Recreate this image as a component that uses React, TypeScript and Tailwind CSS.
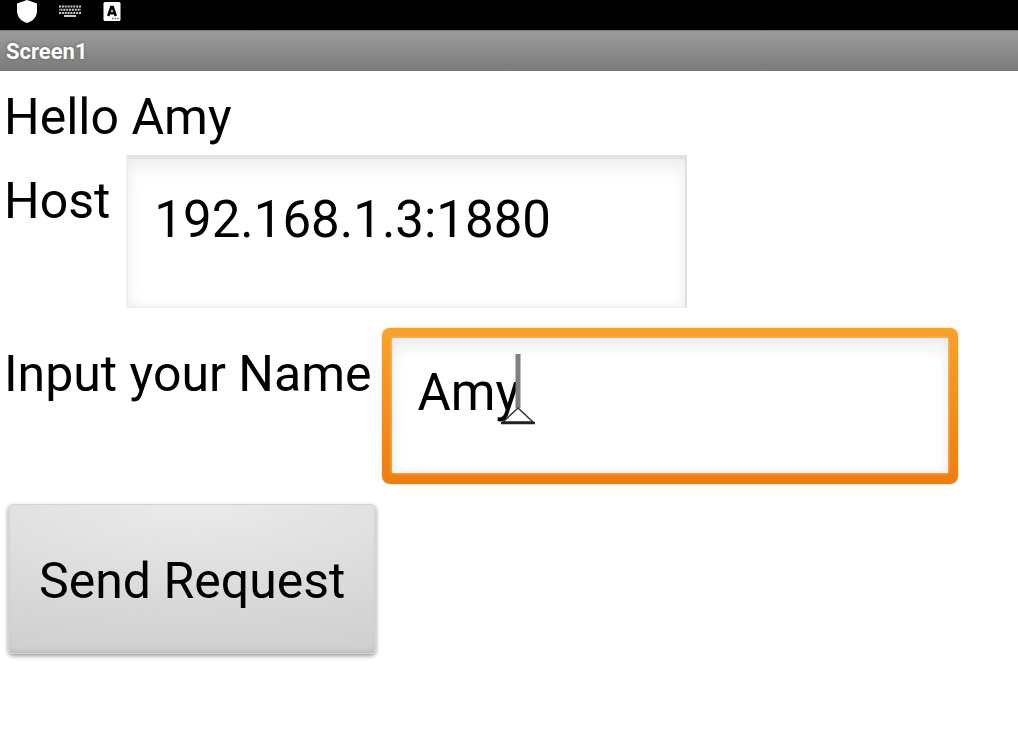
import { useState } from "react";

function StatusBar() {
  return (
    <div className="flex h-[30px] items-start gap-[18px] bg-black pl-[17px]">
      <svg width="20" height="24" viewBox="0 0 20 24" aria-hidden="true">
        <path d="M10 0 L20 3.500 V11 C20 17 15.500 21.500 10 23 C4.500 21.500 0 17 0 11 V3.500 Z" fill="#fff" />
      </svg>
      <svg width="30" height="24" viewBox="0 0 30 24" aria-hidden="true">
        <g stroke="#ccc" strokeWidth="2" fill="none">
          <path d="M4 6.500 H26" strokeDasharray="2 0.860" />
          <path d="M4 9.700 H26" strokeDasharray="2 0.860" strokeDashoffset="1.400" />
          <path d="M4 12.900 H26" strokeDasharray="2 0.860" />
          <path d="M9 16 H21" />
        </g>
      </svg>
      <svg width="18" height="24" viewBox="0 0 18 24" aria-hidden="true">
        <rect x="0.500" y="2" width="17" height="19" rx="1.500" fill="#fff" />
        <path
          d="M5.200 16 L8.300 7 H9.700 L12.800 16 M6.500 13.200 H11.500"
          fill="none"
          stroke="#000"
          strokeWidth="2.600"
        />
        <path d="M9 18.500 H16" stroke="#777" strokeWidth="1.500" strokeDasharray="1.600 1" />
      </svg>
    </div>
  );
}

export default function App() {
  const [host, setHost] = useState("192.168.1.3:1880");
  const [name, setName] = useState("Amy");

  return (
    <div className="min-h-screen bg-white font-[Roboto,sans-serif] text-[50px] leading-[60px] text-black">
      <StatusBar />
      <header className="flex h-[41px] items-center border-t border-[#777] bg-linear-to-b from-[#9c9c9c] to-[#7b7b7b] px-[6px] pt-[2px]">
        <h1 className="text-[22px] leading-[26px] font-bold text-white [text-shadow:0_0_3px_#555]">Screen1</h1>
      </header>
      <main className="flex flex-col items-start px-1 pt-4">
        <p>Hello Amy</p>
        <div className="mt-2 flex items-start gap-4">
          <label htmlFor="host" className="shrink-0 pt-4">
            Host
          </label>
          <input
            id="host"
            type="text"
            value={host}
            onChange={(e) => setHost(e.target.value)}
            className="h-[153px] w-[561px] min-w-0 border-2 border-t-4 border-[#f0f0f0] border-t-[#e2e2e2] border-r-[#dedede] bg-white px-[26px] pt-[30px] pb-[57px] text-[51px] shadow-[inset_0_10px_20px_-4px_#ececec,inset_0_0_12px_#f4f4f4] outline-none"
          />
        </div>
        <div className="mt-5 flex items-start gap-[10px]">
          <label htmlFor="name" className="shrink-0 pt-4">
            Input your Name
          </label>
          <div className="relative min-w-0 rounded-[8px] bg-linear-to-b from-[#f9a12d] to-[#ee7d0f] px-[10px] pt-[10px] pb-[11px] shadow-[0_0_2px_#f5ae60]">
            <input
              id="name"
              type="text"
              value={name}
              onChange={(e) => setName(e.target.value)}
              className="block h-[135px] w-[556px] max-w-full bg-white px-[26px] pt-[24px] pb-[51px] text-[51px] caret-transparent shadow-[inset_0_10px_20px_-4px_#e9e9e9,inset_0_0_10px_#eee,0_0_3px_#fbd09a] outline-none"
            />
            <svg
              className="pointer-events-none absolute top-[26px] left-[118px]"
              width="36"
              height="72"
              viewBox="0 0 36 72"
              aria-hidden="true"
            >
              <path d="M18 0 V54" stroke="#808080" strokeWidth="5" />
              <path d="M18 54 L3 68 H33 Z" fill="#fff" stroke="#333" strokeWidth="1.500" />
              <path d="M1 69 H35" stroke="#222" strokeWidth="2.500" />
            </svg>
          </div>
        </div>
        <button
          type="button"
          className="mt-5 ml-1 h-[150px] rounded-[5px] border border-[#d4d4d4] bg-[radial-gradient(130%_100%_at_50%_0%,#ebebeb,#d0d0d0)] px-[30px] pt-1 shadow-[0_2px_4px_#999,inset_0_-4px_5px_-2px_#bcbcbc]"
        >
          Send Request
        </button>
      </main>
    </div>
  );
}
